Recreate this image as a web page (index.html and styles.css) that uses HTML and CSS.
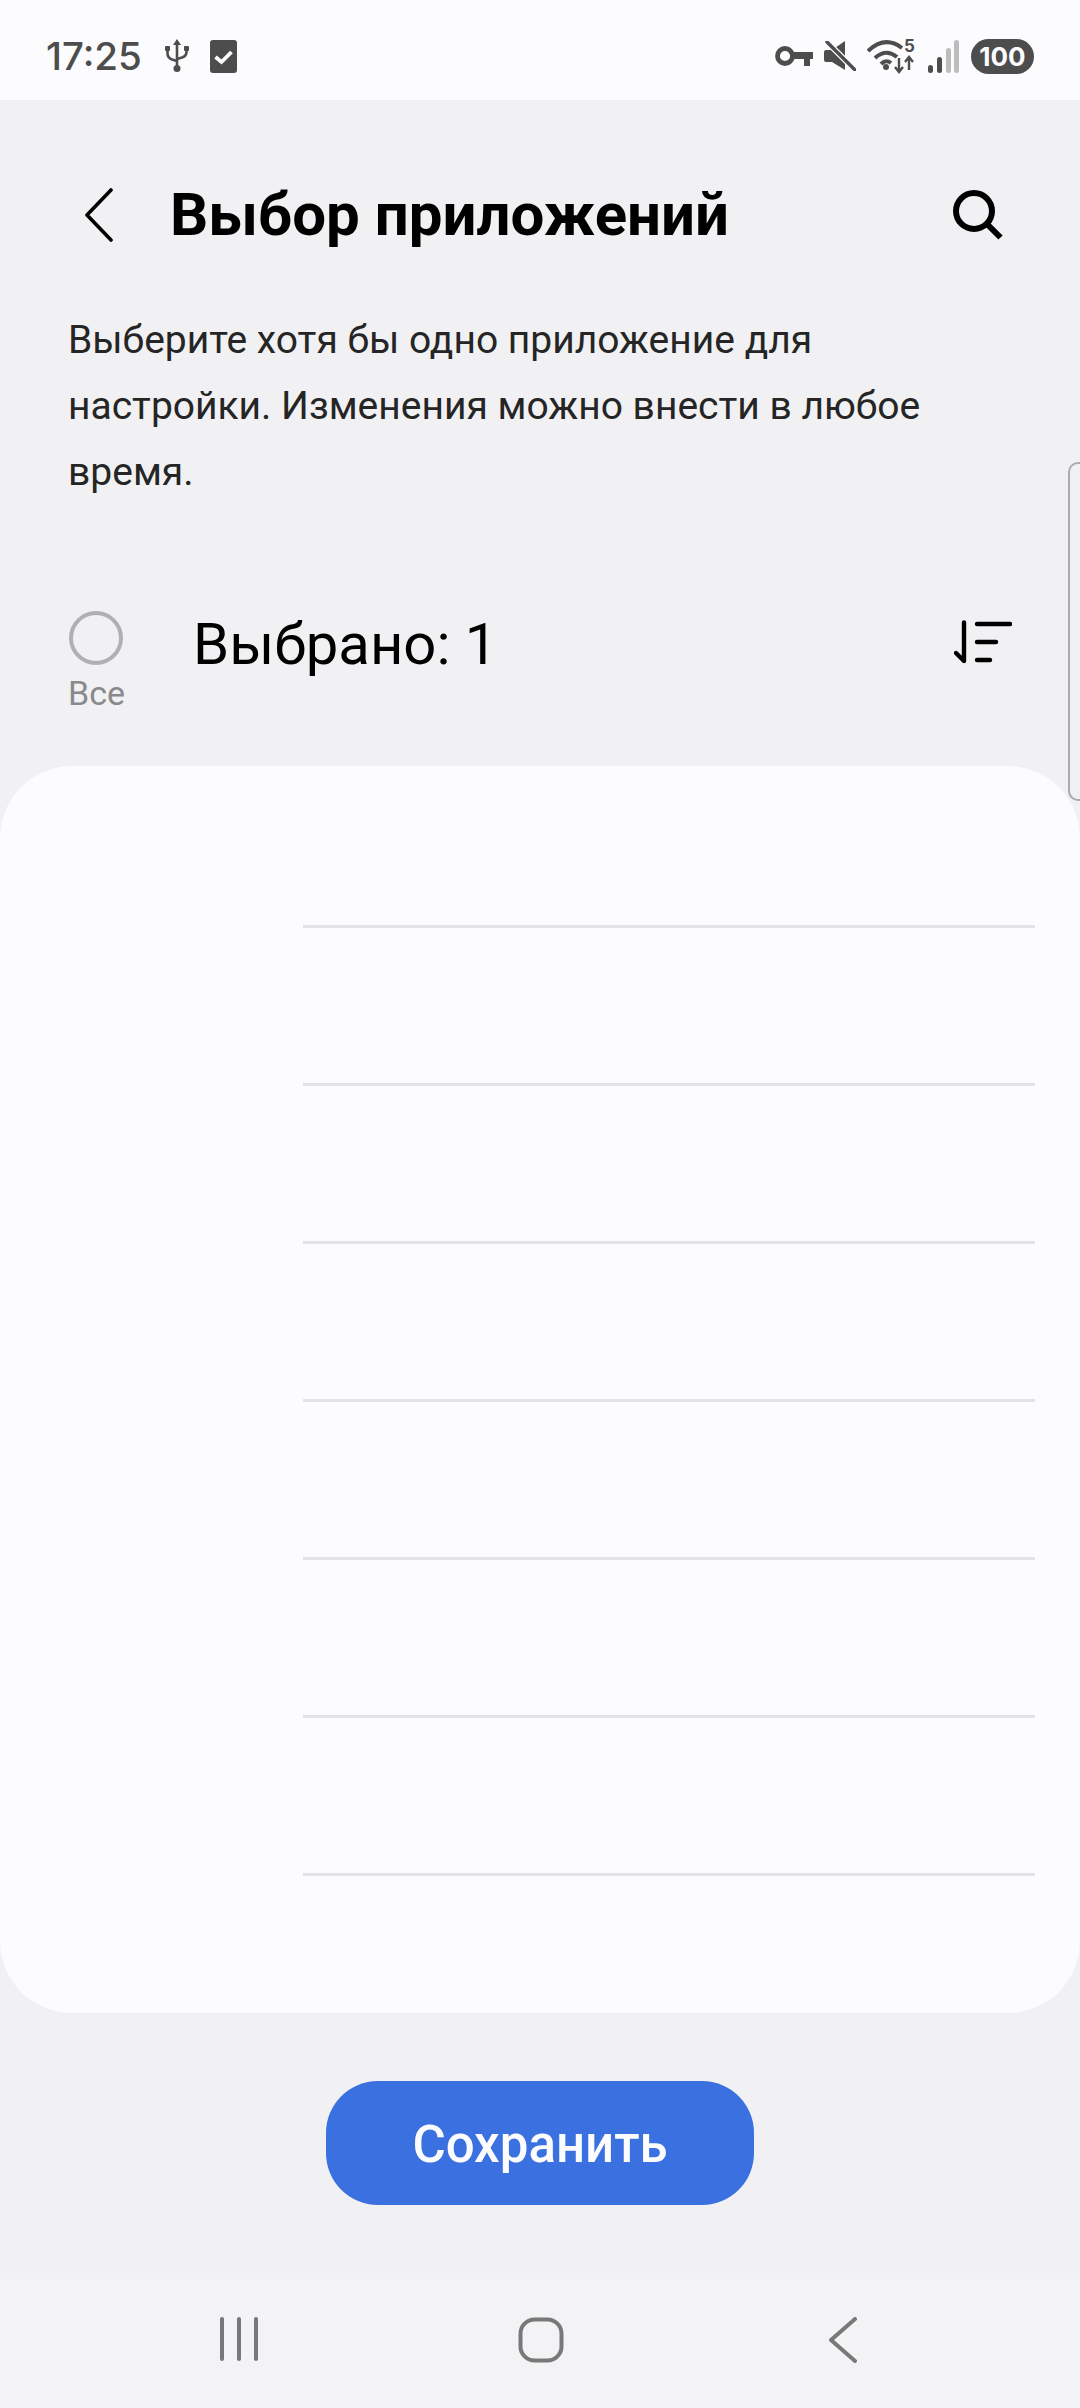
FILE: index.html
```html
<!DOCTYPE html>
<html lang="ru">
<head>
<meta charset="utf-8">
<title>Выбор приложений</title>
<link rel="stylesheet" href="styles.css">
</head>
<body>
<div class="screen">
  <div class="status">
    <div class="status-left">
      <span class="time">17:25</span>
      <svg class="usb" width="24" height="34" viewBox="0 0 24 34"><g fill="none" stroke="#4d4d4d" stroke-width="2.6"><path d="M12 5V29"/><path d="M2.500 10V14Q2.500 19 7 20.500L12 22"/><path d="M21.500 10V13Q21.500 17 17 18.500L12 20"/></g><path d="M12 0L16 6H8Z" fill="#4d4d4d"/><circle cx="12" cy="29.500" r="3.500" fill="#4d4d4d"/><rect x="0" y="7" width="5" height="5" rx="1" fill="#4d4d4d"/><rect x="19" y="7" width="5" height="5" rx="1" fill="#4d4d4d"/></svg>
      <svg class="check" width="27" height="33" viewBox="0 0 27 33"><rect width="27" height="33" rx="3" fill="#4d4d4d"/><path d="M5.500 17L11.500 22L21.500 12" fill="none" stroke="#fcfcfe" stroke-width="3.800"/></svg>
    </div>
    <div class="status-right">
      <svg class="key" width="38" height="22" viewBox="0 0 38 22"><circle cx="10" cy="11" r="7.500" fill="none" stroke="#4d4d4d" stroke-width="4.800"/><path d="M16 7H38V14H35V21H29V14H16Z" fill="#4d4d4d"/></svg>
      <svg class="mute" width="32" height="30" viewBox="0 0 32 30"><path d="M0 11Q0 9 2 9H8L21 0V29L8 21H2Q0 21 0 19Z" fill="#4d4d4d"/><path d="M3 1L31 29" stroke="#fcfcfe" stroke-width="6"/><path d="M3 1L31 29" stroke="#4d4d4d" stroke-width="3.400" stroke-linecap="round"/></svg>
      <svg class="wifi" width="49" height="38" viewBox="0 -3 49 38"><g fill="none" stroke="#4d4d4d" stroke-width="4"><path d="M1 12Q18 -4 35 9"/><path d="M8 19Q19 9 30 18"/><path d="M14 25Q19 20 24 24"/></g><circle cx="19" cy="28" r="3" fill="#4d4d4d"/><text x="37" y="13" class="wifi-five">5</text><g fill="none" stroke="#4d4d4d" stroke-width="2.400"><path d="M32 19V33M28 28L32 33L36 28"/><path d="M42 31V18M38 23L42 18L46 23"/></g></svg>
      <svg class="signal" width="31" height="33" viewBox="0 0 31 33"><rect x="0" y="25" width="5" height="8" rx="2.500" fill="#4d4d4d"/><rect x="9" y="17" width="5" height="16" rx="2.500" fill="#4d4d4d"/><rect x="18" y="8" width="5" height="25" rx="2.500" fill="#bdbdbd"/><rect x="26" y="0" width="5" height="33" rx="2.500" fill="#bdbdbd"/></svg>
      <span class="battery">100</span>
    </div>
  </div>

  <div class="main">
    <div class="handle"></div>
    <header class="header">
      <svg class="back" width="30" height="54" viewBox="0 0 30 54"><path d="M27 2L3 27L27 52" fill="none" stroke="#000" stroke-width="3.600" stroke-linecap="round" stroke-linejoin="round"/></svg>
      <h1 class="title">Выбор приложений</h1>
      <svg class="search" width="50" height="50" viewBox="0 0 50 50"><circle cx="21" cy="21" r="18" fill="none" stroke="#000" stroke-width="6"/><path d="M33.500 33.500L47.500 47.500" stroke="#000" stroke-width="6"/></svg>
    </header>

    <p class="desc">Выберите хотя бы одно приложение для настройки. Изменения можно внести в любое время.</p>

    <div class="select-row">
      <div class="all">
        <span class="radio"></span>
        <span class="all-label">Все</span>
      </div>
      <span class="count">Выбрано: 1</span>
      <svg class="sort" width="58" height="44" viewBox="0 0 58 44"><g fill="none" stroke="#000" stroke-width="4.400" stroke-linecap="round" stroke-linejoin="round"><path d="M10 2.500V41L2 33"/><path d="M23 4H56"/><path d="M23 22H42"/><path d="M23 40H36"/></g></svg>
    </div>

    <section class="card">
      <div class="row"></div>
      <div class="row"></div>
      <div class="row"></div>
      <div class="row"></div>
      <div class="row"></div>
      <div class="row"></div>
      <div class="row"></div>
    </section>

    <div class="actions">
      <button class="save">Сохранить</button>
    </div>
  </div>

  <nav class="nav">
    <svg class="recents" width="40" height="44" viewBox="0 0 40 44"><g stroke="#787878" stroke-width="4" stroke-linecap="round"><path d="M3 2V42"/><path d="M20 2V42"/><path d="M37 2V42"/></g></svg>
    <svg class="home" width="46" height="46" viewBox="0 0 46 46"><rect x="2.500" y="2.500" width="41" height="41" rx="14" fill="none" stroke="#787878" stroke-width="4"/></svg>
    <svg class="nav-back" width="30" height="46" viewBox="0 0 30 46"><path d="M27 2L3 23L27 44" fill="none" stroke="#787878" stroke-width="4" stroke-linecap="round" stroke-linejoin="round"/></svg>
  </nav>
</div>
</body>
</html>
```

FILE: styles.css
```css
* { box-sizing: border-box; }
html, body { margin: 0; padding: 0; }
body { background: #f1f1f3; font-family: "Roboto", "Liberation Sans", sans-serif; }

.screen { width: 1080px; height: 2408px; display: flex; flex-direction: column; overflow: hidden; }

.status {
  height: 100px; flex: none; background: #fcfcfe; display: flex; justify-content: space-between;
  align-items: center; padding: 12px 46px 0 46px;
}
.status-left, .status-right { display: flex; align-items: center; }
.time { font-family: "Inter", sans-serif; font-size: 38.500px; font-weight: 500; color: #4d4d4d; line-height: 40px; }
.usb { margin-left: 23px; }
.check { margin-left: 21px; }
.mute { margin-left: 11px; }
.wifi { margin: -3px 0 0 11px; }
.wifi-five { font-family: "Inter", sans-serif; font-size: 17px; font-weight: 700; fill: #4d4d4d; }
.signal { margin-left: 12px; }
.battery {
  margin-left: 12px; width: 63px; height: 35px; border-radius: 18px; background: #4d4d4d; color: #fcfcfe;
  font-family: "Inter", sans-serif; font-size: 26px; font-weight: 700; line-height: 35px; text-align: center;
}

.main { flex: 1; position: relative; display: flex; flex-direction: column; background: #f1f1f3; }
.handle {
  position: absolute; top: 362px; right: 0; width: 12px; height: 339px;
  border: 2px solid #ababad; border-right: 0; border-radius: 10px 0 0 10px;
}

.header { height: 130px; margin-top: 50px; display: flex; align-items: center; padding: 0 77px 0 84px; }
.title { margin: 0 0 0 56px; flex: 1; font-size: 60px; font-weight: 700; color: #000; line-height: 66px; }

.desc {
  margin: 27px 0 0; padding: 0 68px; font-size: 39px; line-height: 66px; color: #252525;
}

.select-row { margin-top: 106px; height: 120px; display: flex; align-items: flex-start; padding: 0 68px; }
.all { width: 125px; flex: none; display: flex; flex-direction: column; }
.radio { width: 54px; height: 54px; margin-left: 1px; border: 4px solid #b0b0b3; border-radius: 50%; }
.all-label { font-size: 34px; line-height: 38px; margin-top: 9px; color: #8a8a8d; }
.count { flex: 1; font-size: 58px; line-height: 66px; color: #000; margin-top: 0; }
.sort { margin-top: 9px; }

.card { margin-top: 35px; height: 1247px; flex: none; background: #fcfcfe; border-radius: 72px; padding-top: 4px; }
.row { height: 158px; margin: 0 45px 0 303px; border-bottom: 3px solid #e3e3e5; }

.actions { display: flex; justify-content: center; margin-top: 68px; }
.save {
  width: 428px; height: 124px; border: 0; border-radius: 52px; background: #3a70df; color: #fcfcfe;
  font-family: "Roboto", sans-serif; font-size: 51px; font-weight: 500; padding: 2px 0 0;
}

.nav { height: 135px; flex: none; background: #f3f3f5; display: flex; align-items: flex-start; padding: 44px 0 0 219px; }
.home { margin-left: 259px; }
.nav-back { margin-left: 264px; }
```
